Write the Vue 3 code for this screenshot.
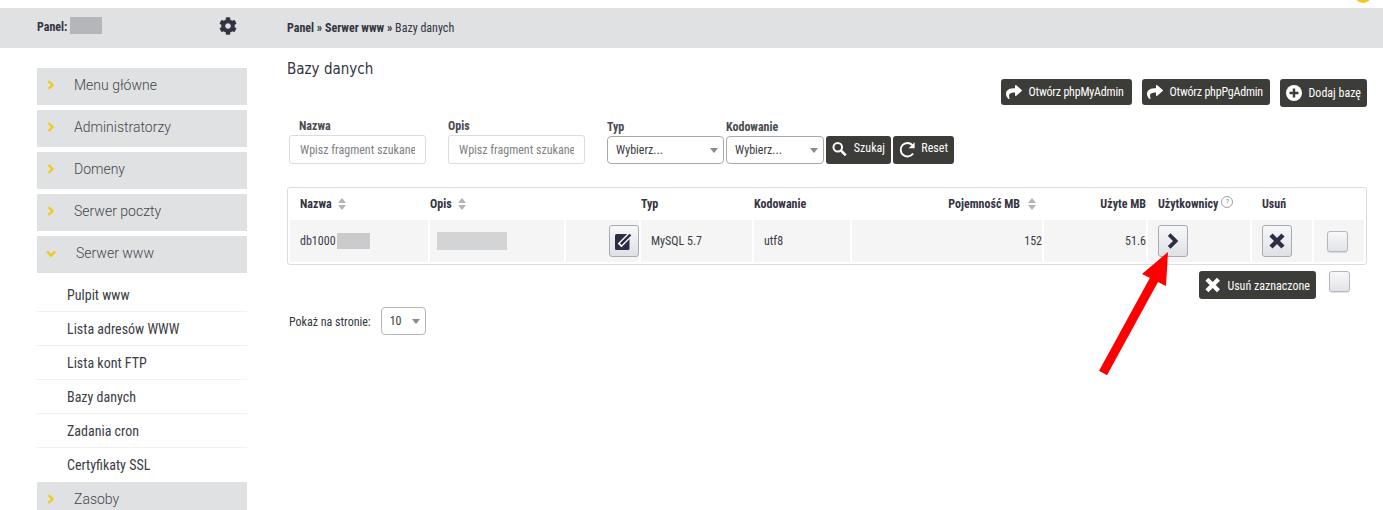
<script setup>
const menuTop = ['Menu główne', 'Administratorzy', 'Domeny', 'Serwer poczty']
const subItems = ['Pulpit www', 'Lista adresów WWW', 'Lista kont FTP', 'Bazy danych', 'Zadania cron', 'Certyfikaty SSL']
const gearPath = 'M487.4 315.7l-42.6-24.6c4.3-23.2 4.3-47 0-70.2l42.6-24.6c4.9-2.8 7.1-8.6 5.5-14-11.1-35.6-30-67.8-54.7-94.6-3.8-4.1-10-5.1-14.8-2.3L380.8 110c-17.9-15.4-38.5-27.3-60.8-35.1V25.8c0-5.6-3.9-10.5-9.4-11.7-36.7-8.2-74.3-7.8-109.2 0-5.5 1.2-9.4 6.1-9.4 11.7V75c-22.2 7.9-42.8 19.8-60.8 35.1L88.7 85.5c-4.9-2.8-11-1.9-14.8 2.3-24.7 26.7-43.6 58.9-54.7 94.6-1.7 5.4.6 11.2 5.5 14L67.3 221c-4.3 23.2-4.3 47 0 70.2l-42.6 24.6c-4.9 2.8-7.1 8.6-5.5 14 11.1 35.6 30 67.8 54.7 94.6 3.8 4.1 10 5.1 14.8 2.3l42.6-24.6c17.9 15.4 38.5 27.3 60.8 35.1v49.2c0 5.6 3.9 10.5 9.4 11.7 36.7 8.2 74.3 7.8 109.2 0 5.5-1.2 9.4-6.1 9.4-11.7v-49.2c22.2-7.9 42.8-19.8 60.8-35.1l42.6 24.6c4.9 2.8 11 1.9 14.8-2.3 24.7-26.7 43.6-58.9 54.7-94.6 1.5-5.5-.7-11.3-5.6-14.1zM256 336c-44.1 0-80-35.9-80-80s35.9-80 80-80 80 35.9 80 80-35.9 80-80 80z'
const sharePath = 'M503.691 189.836L327.687 37.851C312.281 24.546 288 35.347 288 56.015v80.053C127.371 137.907 0 170.1 0 322.326c0 61.441 39.581 122.309 83.333 154.132 13.653 9.931 33.111-2.533 28.077-18.631C66.066 312.814 132.917 274.316 288 272.085V360c0 20.7 24.3 31.453 39.687 18.164l176.004-152c11.071-9.562 11.086-26.753 0-36.328z'
</script>

<template>
  <div class="page">
    <div class="dot"></div>
    <header class="topbar">
      <div class="panel-side">
        <span class="panel-name">Panel:</span>
        <span class="blur blur-panel"></span>
        <svg class="gear" viewBox="0 0 512 512"><path :d="gearPath" fill="#33343f" /></svg>
      </div>
      <div class="crumbs"><b>Panel » Serwer www »</b> Bazy danych</div>
    </header>

    <div class="layout">
      <aside class="sidebar">
        <div v-for="item in menuTop" :key="item" class="menu-item">
          <svg class="chev" viewBox="0 0 8 10"><path d="M1.5 1l4 4-4 4" fill="none" stroke="#f2c81e" stroke-width="2.4" /></svg>
          <span>{{ item }}</span>
        </div>
        <div class="menu-item open">
          <svg class="chev-down" viewBox="0 0 10 8"><path d="M1 1.5l4 4 4-4" fill="none" stroke="#f2c81e" stroke-width="2.4" /></svg>
          <span>Serwer www</span>
        </div>
        <ul class="sub">
          <li v-for="s in subItems" :key="s">{{ s }}</li>
        </ul>
        <div class="menu-item">
          <svg class="chev" viewBox="0 0 8 10"><path d="M1.5 1l4 4-4 4" fill="none" stroke="#f2c81e" stroke-width="2.4" /></svg>
          <span>Zasoby</span>
        </div>
      </aside>

      <main class="content">
        <div class="title-row">
          <h1>Bazy danych</h1>
          <div class="actions">
            <a class="btn btn-link w-my">
              <svg class="ico-share" viewBox="0 0 512 512"><path :d="sharePath" fill="#fff" /></svg>Otwórz phpMyAdmin
            </a>
            <a class="btn btn-link w-pg">
              <svg class="ico-share" viewBox="0 0 512 512"><path :d="sharePath" fill="#fff" /></svg>Otwórz phpPgAdmin
            </a>
            <a class="btn btn-add">
              <svg class="ico-plus" viewBox="0 0 16 16">
                <circle cx="8" cy="8" r="8" fill="#fff" />
                <path d="M8 3.5v9M3.5 8h9" stroke="#3c3c38" stroke-width="2.4" />
              </svg>Dodaj bazę
            </a>
          </div>
        </div>

        <form class="filters">
          <label class="field f-name">
            <span>Nazwa</span>
            <input class="input" placeholder="Wpisz fragment szukanego" />
          </label>
          <label class="field f-desc">
            <span>Opis</span>
            <input class="input" placeholder="Wpisz fragment szukanego" />
          </label>
          <label class="field f-type">
            <span>Typ</span>
            <div class="select">Wybierz...<i class="caret"></i></div>
          </label>
          <label class="field f-enc">
            <span>Kodowanie</span>
            <div class="select">Wybierz...<i class="caret"></i></div>
          </label>
          <a class="btn btn-tall btn-search">
            <svg class="ico-search" viewBox="0 0 16 16">
              <circle cx="6.2" cy="6.2" r="4.6" fill="none" stroke="#fff" stroke-width="2.2" />
              <path d="M9.8 9.8l5 5" stroke="#fff" stroke-width="2.8" />
            </svg><span class="raised">Szukaj</span>
          </a>
          <a class="btn btn-tall btn-reset">
            <svg class="ico-reset" viewBox="0 0 18 18">
              <path d="M14.6 12.6A7 7 0 1 1 13.8 3.8" fill="none" stroke="#fff" stroke-width="2" />
              <path d="M16.2 1v6.2H10z" fill="#fff" />
            </svg><span class="raised">Reset</span>
          </a>
        </form>

        <section class="table">
          <div class="cell-h pl10">Nazwa<i class="sort"></i></div>
          <div class="cell-h span2">Opis<i class="sort"></i></div>
          <div class="cell-h">Typ</div>
          <div class="cell-h">Kodowanie</div>
          <div class="cell-h right pr6">Pojemność MB<i class="sort sort-wide"></i></div>
          <div class="cell-h right">Użyte MB</div>
          <div class="cell-h pl10">Użytkownicy<span class="help">?</span></div>
          <div class="cell-h pl10">Usuń</div>
          <div class="cell-h"></div>

          <div class="cell pl10">db1000<span class="blur blur-db"></span></div>
          <div class="cell"><span class="blur blur-desc"></span></div>
          <div class="cell end">
            <button class="square" type="button">
              <svg class="ico-edit" viewBox="0 0 18 17">
                <rect x="0" y="1" width="14.5" height="16" rx="1.5" fill="#2c2e45" />
                <path d="M4.6 12.4L14.8 2.2" stroke="#fff" stroke-width="5.2" />
                <path d="M5.8 11.2L15.4 1.6" stroke="#2c2e45" stroke-width="2.6" />
              </svg>
            </button>
          </div>
          <div class="cell pl10">MySQL 5.7</div>
          <div class="cell pl10">utf8</div>
          <div class="cell right">152</div>
          <div class="cell right">51.6</div>
          <div class="cell pl10">
            <button class="square" type="button">
              <svg class="ico-go" viewBox="0 0 12 16"><path d="M2.2 1.6l6.4 6.4-6.4 6.4" fill="none" stroke="#2c2e45" stroke-width="3.8" /></svg>
            </button>
          </div>
          <div class="cell pl10">
            <button class="square" type="button">
              <svg class="ico-x" viewBox="0 0 16 16"><path d="M2 2l12 12M14 2L2 14" stroke="#2c2e45" stroke-width="4.4" /></svg>
            </button>
          </div>
          <div class="cell center"><span class="check"></span></div>
        </section>

        <div class="bulk">
          <a class="btn btn-tall btn-bulk">
            <svg class="ico-x-w" viewBox="0 0 16 16"><path d="M2 2l12 12M14 2L2 14" stroke="#fff" stroke-width="4.4" /></svg><span class="lowered">Usuń zaznaczone</span>
          </a>
          <span class="check"></span>
        </div>

        <div class="per-page">
          <span class="per-label">Pokaż na stronie:</span>
          <div class="select select-small">10<i class="caret"></i></div>
        </div>
      </main>
    </div>

    <svg class="arrow" viewBox="0 0 100 140" width="100" height="140">
      <path d="M13 128L65 33" stroke="#fe0000" stroke-width="9" fill="none" />
      <path d="M78 7L76 41 52 29z" fill="#fe0000" />
    </svg>
  </div>
</template>

<style scoped>
.page {
  position: relative;
  width: 1383px;
  height: 510px;
  overflow: hidden;
  background: #fff;
  font-family: Roboto, "Liberation Sans", sans-serif;
  font-stretch: 75%;
  color: #3b3d44;
}
.dot {
  position: absolute;
  top: -15px;
  left: 1354px;
  width: 18px;
  height: 18px;
  border-radius: 50%;
  background: #f4c51d;
}
.topbar {
  margin-top: 8px;
  height: 40px;
  background: #dfe1e3;
  display: flex;
  align-items: center;
}
.panel-side {
  width: 287px;
  padding-left: 37px;
  box-sizing: border-box;
  display: flex;
  align-items: center;
  position: relative;
  margin-bottom: 5px;
}
.panel-name {
  font-size: 12px;
  font-weight: 700;
  color: #33343f;
  margin-top: 2px;
}
.blur {
  display: inline-block;
  background: #c6c7ca;
}
.blur-panel {
  width: 32px;
  height: 17px;
  margin-left: 3px;
  background: #b5b6ba;
}
.gear {
  position: absolute;
  left: 219px;
  top: 0;
  width: 18px;
  height: 18px;
}
.crumbs {
  font-size: 12px;
  color: #33343f;
}
.layout {
  display: flex;
}
.sidebar {
  width: 210px;
  margin: 20px 40px 0 37px;
  flex: none;
}
.menu-item {
  height: 37px;
  background: #dfe1e3;
  margin-bottom: 5px;
  display: flex;
  align-items: center;
  font-size: 14px;
  font-weight: 300;
  font-stretch: 100%;
  color: #44464c;
  padding: 0 0 4px 37px;
  box-sizing: border-box;
  position: relative;
}
.chev {
  position: absolute;
  left: 10px;
  top: 12px;
  width: 8px;
  height: 10px;
}
.chev-down {
  position: absolute;
  left: 9px;
  top: 14px;
  width: 10px;
  height: 8px;
}
.open {
  padding-left: 39px;
}
.sub {
  list-style: none;
  margin: 0;
  padding: 0;
}
.sub li {
  height: 34px;
  line-height: 34px;
  padding-left: 30px;
  font-size: 14px;
  color: #3b3d44;
  border-bottom: 1px solid #f1f1f1;
  box-sizing: border-box;
}
.sub li:last-child {
  border-bottom: none;
}
.content {
  width: 1080px;
  flex: none;
}
.title-row {
  display: flex;
  justify-content: space-between;
  height: 62px;
}
h1 {
  margin: 11px 0 0;
  font-size: 15px;
  font-weight: 400;
  line-height: 20px;
  color: #33343f;
  font-family: "DejaVu Sans", sans-serif;
  font-stretch: 75%;
}
.actions {
  display: flex;
  gap: 10px;
  align-items: flex-start;
  margin-top: 31px;
}
.btn {
  display: inline-flex;
  align-items: center;
  height: 26px;
  padding: 0 6px;
  box-sizing: border-box;
  background: #3c3c38;
  color: #fff;
  border-radius: 3px;
  font-size: 12px;
  white-space: nowrap;
}
.btn-link {
  padding-left: 5px;
  letter-spacing: -.2px;
}
.w-my {
  width: 131px;
}
.w-pg {
  width: 128px;
}
.btn-add {
  height: 28px;
}
.btn-tall {
  height: 28px;
}
.raised {
  margin-bottom: 4px;
}
.lowered {
  margin-top: 2px;
}
.ico-share {
  width: 16px;
  height: 16px;
  margin-right: 7px;
}
.ico-plus {
  width: 16px;
  height: 16px;
  margin-right: 7px;
}
.filters {
  display: flex;
  align-items: flex-end;
  height: 54px;
  margin-left: 2px;
}
.field {
  display: flex;
  flex-direction: column;
  font-size: 12px;
  font-weight: 700;
  color: #4a4b50;
}
.field > span {
  padding-left: 10px;
  line-height: 14px;
  margin-bottom: 2px;
}
.f-name {
  width: 137px;
  margin-right: 22px;
}
.f-desc {
  width: 137px;
  margin-right: 22px;
}
.f-desc > span,
.f-type > span,
.f-enc > span {
  padding-left: 0;
}
.f-type {
  width: 117px;
  margin-right: 2px;
}
.f-enc {
  width: 98px;
  margin-right: 2px;
}
.input {
  width: 100%;
  height: 29px;
  border: 1px solid #dcdcdc;
  border-radius: 3px;
  box-sizing: border-box;
  padding: 0 10px;
  font-family: inherit;
  font-stretch: 75%;
  font-size: 12px;
  font-weight: 400;
  outline: none;
}
.input::placeholder {
  color: #7d7f83;
  opacity: 1;
}
.select {
  height: 28px;
  border: 1px solid #a9a9a9;
  border-radius: 4px;
  box-sizing: border-box;
  padding-left: 8px;
  line-height: 26px;
  font-size: 12px;
  font-weight: 400;
  color: #3b3d44;
  position: relative;
  background: #fff;
}
.caret {
  position: absolute;
  right: 5px;
  top: 11px;
  border-left: 4.5px solid transparent;
  border-right: 4.5px solid transparent;
  border-top: 5px solid #8a8a8a;
}
.btn-search {
  width: 65px;
  margin-right: 2px;
}
.btn-reset {
  width: 61px;
}
.ico-search {
  width: 16px;
  height: 16px;
  margin: -2px 7px 0 0;
}
.ico-reset {
  width: 18px;
  height: 18px;
  margin-right: 5px;
}
.table {
  margin-top: 23px;
  border: 1px solid #dcdcdc;
  border-radius: 3px;
  padding: 0 2px 2px;
  display: grid;
  grid-template-columns: 138px 134px 73px 111px 96px 190px 102px 102px 60px 50px;
  grid-template-rows: 32px 42px;
  column-gap: 2px;
  height: 78px;
  box-sizing: border-box;
}
.cell-h {
  display: flex;
  align-items: center;
  font-size: 12px;
  font-weight: 700;
  color: #33343f;
  white-space: nowrap;
}
.span2 {
  grid-column: span 2;
}
.pl10 {
  padding-left: 10px;
}
.pr6 {
  padding-right: 6px;
}
.right {
  justify-content: flex-end;
}
.sort {
  position: relative;
  display: inline-block;
  width: 8px;
  height: 12px;
  margin-left: 6px;
}
.sort-wide {
  margin-left: 8px;
}
.sort::before,
.sort::after {
  content: "";
  position: absolute;
  left: 0;
  border-left: 4px solid transparent;
  border-right: 4px solid transparent;
}
.sort::before {
  top: 0;
  border-bottom: 5px solid #b4b4b4;
}
.sort::after {
  bottom: 0;
  border-top: 5px solid #b4b4b4;
}
.help {
  display: inline-block;
  width: 10px;
  height: 10px;
  line-height: 10px;
  margin: -4px 0 0 3px;
  border: 1px solid #a0a0a0;
  border-radius: 50%;
  text-align: center;
  font-size: 8px;
  font-weight: 400;
  color: #8a8a8a;
}
.cell {
  background: #f5f5f6;
  display: flex;
  align-items: center;
  font-size: 12px;
  color: #3b3d44;
}
.end {
  justify-content: flex-end;
}
.center {
  justify-content: center;
  padding-right: 3px;
}
.blur-db {
  width: 33px;
  height: 16px;
  margin-left: 1px;
  background: #cbcbcd;
}
.blur-desc {
  width: 70px;
  height: 18px;
  margin-left: 7px;
  background: #d3d4d6;
}
.square {
  width: 30px;
  height: 32px;
  padding: 0;
  border: 1px solid #a9abb2;
  border-radius: 3px;
  background: linear-gradient(#f8f8fa, #dfe1e6);
  display: flex;
  align-items: center;
  justify-content: center;
}
.ico-edit {
  width: 18px;
  height: 17px;
}
.ico-go {
  width: 12px;
  height: 16px;
}
.ico-x {
  width: 16px;
  height: 16px;
}
.check {
  display: inline-block;
  width: 21px;
  height: 21px;
  box-sizing: border-box;
  border: 1px solid #b5b7bd;
  border-radius: 3px;
  background: linear-gradient(#f9f9fb, #e2e3e8);
  box-shadow: 0 1px 1px rgba(0, 0, 0, .12);
}
.bulk {
  display: flex;
  justify-content: flex-end;
  gap: 13px;
  margin: 6px 17px 0 0;
  height: 28px;
}
.btn-bulk {
  width: 117px;
}
.ico-x-w {
  width: 16px;
  height: 16px;
  margin-right: 7px;
}
.per-page {
  display: flex;
  align-items: center;
  gap: 10px;
  margin: 8px 0 0 2px;
  font-size: 12px;
  color: #33343f;
}
.per-label {
  padding-top: 2px;
}
.select-small {
  width: 45px;
  border-color: #b5b5b5;
}
.arrow {
  position: absolute;
  left: 1090px;
  top: 245px;
}
</style>
